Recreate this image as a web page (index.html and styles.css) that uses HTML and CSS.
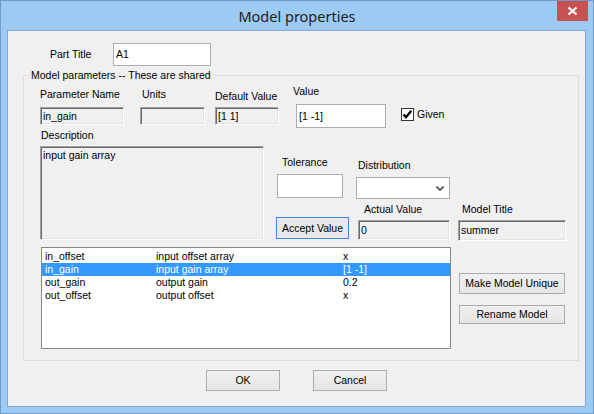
FILE: index.html
```html
<!DOCTYPE html>
<html>
<head>
<meta charset="utf-8">
<link rel="stylesheet" href="styles.css">
</head>
<body>
<div class="win">
  <div class="titlebar">
    <span></span>
    <span class="title">Model properties</span>
    <span class="close"><svg width="31" height="20" viewBox="0 0 31 20"><path d="M11.5 6.5 L19.5 13.5 M19.5 6.5 L11.5 13.5" stroke="#fff" stroke-width="2.2" fill="none"/></svg></span>
  </div>
  <div class="client">
    <div class="part-row">
      <span class="part-label">Part Title</span>
      <div class="edit part-input">A1</div>
    </div>
    <fieldset class="group">
      <legend>Model parameters -- These are shared</legend>
      <div class="row-a">
        <div class="col c1">
          <div class="lbl">Parameter Name</div>
          <div class="sunken f1">in_gain</div>
        </div>
        <div class="col c2">
          <div class="lbl">Units</div>
          <div class="sunken f2"></div>
        </div>
        <div class="col c3">
          <div class="lbl">Default Value</div>
          <div class="sunken f3">[1 1]</div>
        </div>
        <div class="col c4">
          <div class="lbl">Value</div>
          <div class="edit f4">[1 -1]</div>
        </div>
        <div class="check-wrap">
          <span class="checkbox"><svg width="11" height="11" viewBox="0 0 11 11"><path d="M1.5 5.5 L4 8.3 L9.3 1.8" stroke="#000" stroke-width="2.2" fill="none"/></svg></span>
          <span>Given</span>
        </div>
      </div>
      <div class="row-b">
        <div class="desc-col">
          <div class="lbl desc-lbl">Description</div>
          <div class="sunken desc-box">input gain array</div>
        </div>
        <div class="right-part">
          <div class="sub1">
            <div class="tol-col">
              <div class="lbl tol-lbl">Tolerance</div>
              <div class="edit tol-input"></div>
            </div>
            <div class="dist-col">
              <div class="lbl dist-lbl">Distribution</div>
              <div class="select"><svg width="8" height="5" viewBox="0 0 8 5"><path d="M0.5 0.5 L4 4 L7.5 0.5" stroke="#444" stroke-width="1.6" fill="none"/></svg></div>
            </div>
          </div>
          <div class="sub2">
            <div class="btn accept">Accept Value</div>
            <div class="act-col">
              <div class="lbl act-lbl">Actual Value</div>
              <div class="sunken act-box">0</div>
            </div>
            <div class="mt-col">
              <div class="lbl mt-lbl">Model Title</div>
              <div class="sunken mt-box">summer</div>
            </div>
          </div>
        </div>
      </div>
      <div class="row-c">
        <div class="list">
          <div class="lrow"><span class="lc1">in_offset</span><span class="lc2">input offset array</span><span>x</span></div>
          <div class="lrow sel"><span class="lc1">in_gain</span><span class="lc2">input gain array</span><span>[1 -1]</span></div>
          <div class="lrow"><span class="lc1">out_gain</span><span class="lc2">output gain</span><span>0.2</span></div>
          <div class="lrow"><span class="lc1">out_offset</span><span class="lc2">output offset</span><span>x</span></div>
        </div>
        <div class="side-btns">
          <div class="btn unique">Make Model Unique</div>
          <div class="btn rename">Rename Model</div>
        </div>
      </div>
    </fieldset>
    <div class="bottom-row">
      <div class="btn okbtn">OK</div>
      <div class="btn okbtn">Cancel</div>
    </div>
  </div>
</div>
</body>
</html>
```

FILE: styles.css
```css
* { box-sizing: border-box; }
html, body { margin: 0; padding: 0; }
body { width: 594px; height: 414px; overflow: hidden; }

.win {
  width: 594px;
  height: 414px;
  border: 1px solid #6f9cc6;
  background: #9ccaf2;
  display: flex;
  flex-direction: column;
}

.titlebar {
  height: 29px;
  display: grid;
  grid-template-columns: 1fr auto 1fr;
  align-items: start;
}
.title {
  font-family: "Noto Sans", "Open Sans", sans-serif;
  font-size: 14.5px;
  color: #222;
  line-height: 30px;
}
.close {
  justify-self: end;
  width: 31px;
  height: 20px;
  margin-right: 5px;
  background: #c75050;
  display: flex;
}

.client {
  margin: 0 7px 6px 6px;
  height: 377px;
  border: 1px solid #80a8cf;
  background: #f0f0f0;
  font-family: "Liberation Sans", Arial, sans-serif;
  font-size: 10.5px;
  color: #000;
  line-height: 13px;
}

.part-row {
  margin-top: 12px;
  padding-left: 42px;
  display: flex;
  align-items: center;
}
.part-label { width: 63px; }
.edit {
  background: #fff;
  border: 1px solid #abadb3;
  padding-left: 2px;
  display: flex;
  align-items: center;
}
.part-input { width: 98px; height: 23px; }

.group {
  margin: 3px 0 0 15px;
  width: 556px;
  height: 292px;
  border: 1px solid #dcdcdc;
  padding: 0;
}
.group legend {
  margin-left: 5px;
  padding: 0 2px;
  line-height: 13px;
}

.sunken {
  background: #f0f0f0;
  border-top: 1px solid #a0a0a0;
  border-left: 1px solid #a0a0a0;
  border-right: 1px solid #fff;
  border-bottom: 1px solid #fff;
  box-shadow: inset 1px 1px 0 #696969, inset -1px -1px 0 #e3e3e3;
  padding-left: 2px;
  display: flex;
  align-items: center;
}

.row-a { display: flex; align-items: flex-start; padding-left: 16px; }
.col { display: flex; flex-direction: column; }
.c1 .lbl { margin-top: 6px; }
.c1 .sunken { margin-top: 6px; }
.f1 { width: 84px; height: 18px; }
.c2 { margin-left: 16px; }
.c2 .lbl { margin-top: 6px; padding-left: 2px; }
.c2 .sunken { margin-top: 6px; }
.f2 { width: 65px; height: 18px; }
.c3 { margin-left: 10px; }
.c3 .lbl { margin-top: 8px; }
.c3 .sunken { margin-top: 4px; }
.f3 { width: 64px; height: 18px; }
.c4 { margin-left: 14px; }
.c4 .lbl { margin-top: 3px; }
.f4 { margin-top: 6px; margin-left: 3px; width: 90px; height: 24px; }
.check-wrap {
  margin-left: 15px;
  margin-top: 26px;
  display: flex;
  align-items: center;
  gap: 3px;
}
.checkbox {
  width: 13px;
  height: 13px;
  border: 1px solid #333;
  background: #fff;
  display: flex;
}

.row-b { display: flex; align-items: flex-start; padding-left: 16px; }
.desc-col { display: flex; flex-direction: column; }
.desc-lbl { margin-top: 1px; padding-left: 1px; }
.desc-box {
  margin-top: 4px;
  width: 224px;
  height: 94px;
  align-items: flex-start;
  padding-top: 2px;
}
.right-part { margin-left: 12px; display: flex; flex-direction: column; }
.sub1 { display: flex; align-items: flex-start; }
.tol-col { margin-left: 1px; display: flex; flex-direction: column; }
.tol-lbl { margin-top: 28px; padding-left: 5px; }
.tol-input { margin-top: 5px; width: 66px; height: 24px; }
.dist-col { margin-left: 13px; display: flex; flex-direction: column; }
.dist-lbl { margin-top: 31px; padding-left: 2px; }
.select {
  margin-top: 5px;
  width: 94px;
  height: 22px;
  background: #fff;
  border: 1px solid #acacac;
  display: flex;
  align-items: center;
  justify-content: flex-end;
  padding-right: 5px;
}
.select svg { margin-top: 1px; }

.sub2 { display: flex; align-items: flex-start; }
.btn {
  border: 1px solid #acacac;
  background: linear-gradient(#f0f0f0, #e5e5e5);
  display: flex;
  align-items: center;
  justify-content: center;
  white-space: nowrap;
}
.accept {
  margin-top: 18px;
  width: 73px;
  height: 22px;
  border-color: #3c8de0;
  background: #e8e8e8;
}
.act-col { margin-left: 9px; display: flex; flex-direction: column; }
.act-lbl { margin-top: 4px; padding-left: 6px; }
.act-box { margin-top: 4px; width: 92px; height: 20px; }
.mt-col { margin-left: 8px; display: flex; flex-direction: column; }
.mt-lbl { margin-top: 4px; padding-left: 4px; }
.mt-box { margin-top: 4px; width: 108px; height: 21px; }

.row-c { display: flex; align-items: flex-start; padding-left: 17px; margin-top: 6px; }
.list {
  width: 410px;
  height: 102px;
  background: #fff;
  border: 1px solid #828790;
  padding-top: 2px;
}
.lrow { display: flex; height: 13px; line-height: 13px; padding-left: 3px; }
.lrow.sel { background: #3399ff; color: #fff; }
.lc1 { width: 111px; }
.lc2 { width: 187px; }
.side-btns {
  margin-left: 8px;
  margin-top: 26px;
  display: flex;
  flex-direction: column;
  gap: 11px;
}
.unique { width: 106px; height: 21px; }
.rename { width: 106px; height: 19px; }

.bottom-row {
  margin-top: 9px;
  display: flex;
  justify-content: center;
  gap: 33px;
}
.okbtn { width: 74px; height: 21px; }
```
